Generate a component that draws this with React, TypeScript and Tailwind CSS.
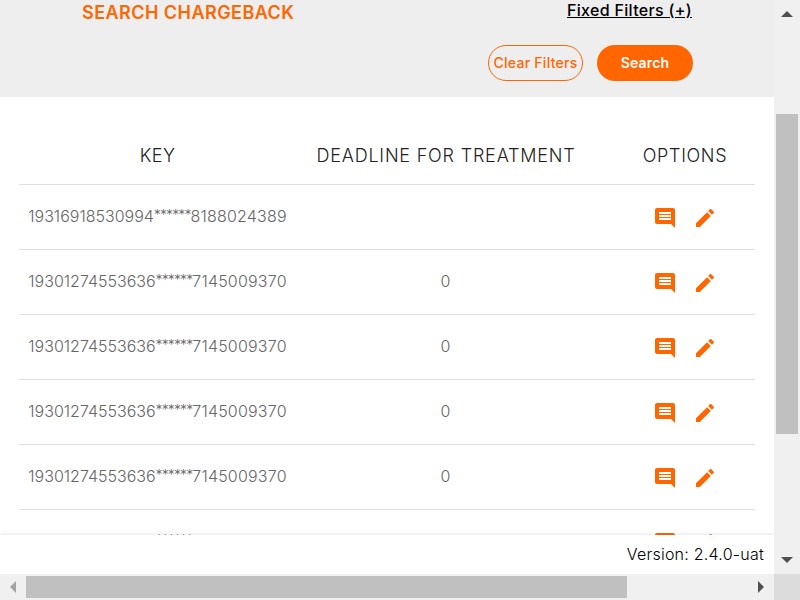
const rows = [
  { key: ["19316918530994", "******", "8188024389"], deadline: "" },
  { key: ["19301274553636", "******", "7145009370"], deadline: "0" },
  { key: ["19301274553636", "******", "7145009370"], deadline: "0" },
  { key: ["19301274553636", "******", "7145009370"], deadline: "0" },
  { key: ["19301274553636", "******", "7145009370"], deadline: "0" },
  { key: ["19301274553636", "******", "7145009370"], deadline: "0" },
];

function CommentIcon() {
  return (
    <svg viewBox="0 0 24 24" className="size-6 fill-[#ff6600]">
      <path d="M21.99 4c0-1.1-.89-2-1.99-2H4c-1.1 0-2 .9-2 2v12c0 1.1.9 2 2 2h14l4 4-.01-18zM18 14H6v-2h12v2zm0-3H6V9h12v2zm0-3H6V6h12v2z" />
    </svg>
  );
}

function EditIcon() {
  return (
    <svg viewBox="0 0 24 24" className="size-6 fill-[#ff6600]">
      <path d="M3 17.25V21h3.75L17.81 9.94l-3.75-3.75L3 17.25zM20.71 7.04c.39-.39.39-1.02 0-1.41l-2.34-2.34c-.39-.39-1.02-.39-1.41 0l-1.83 1.83 3.75 3.75 1.83-1.83z" />
    </svg>
  );
}

function Header() {
  return (
    <header className="h-[97px] shrink-0 bg-[#eeeeee] pl-[82px] pr-[81px]">
      <div className="flex h-[26px] justify-between">
        <h1 className="text-[18px] font-semibold leading-[26px] tracking-[0.45px] text-[#ff6600]">SEARCH CHARGEBACK</h1>
        <a className="mr-px text-[16px] font-medium leading-5 tracking-[0.32px] text-black underline">Fixed Filters (+)</a>
      </div>
      <div className="mt-[19px] flex justify-end gap-[14px]">
        <button className="h-9 w-[95px] whitespace-nowrap rounded-full border border-[#ff6600] pb-0.5 text-center text-[14px] font-medium tracking-[0.27px] text-[#ff6600]">
          Clear Filters
        </button>
        <button className="h-9 w-24 rounded-full bg-[#ff6600] pb-0.5 text-[14px] font-semibold tracking-[0.15px] text-white">Search</button>
      </div>
    </header>
  );
}

function Table() {
  return (
    <main className="h-[438px] overflow-hidden bg-white px-[19px] pt-[30px]">
      <div className="grid h-[58px] grid-cols-[277px_299px_160px] border-b border-[#e0e0e0] text-center text-[18px] font-light leading-[57px] text-[#222222]">
        <div className="tracking-[0.4px]">KEY</div>
        <div className="pl-px tracking-[0.8px]">DEADLINE FOR TREATMENT</div>
        <div className="pl-5 tracking-[0.65px]">OPTIONS</div>
      </div>
      {rows.map((row, i) => (
        <div
          key={i}
          className="grid h-[65px] grid-cols-[277px_299px_160px] border-b border-[#e0e0e0] text-center text-[16px] font-light leading-[62px] text-[#666666]"
        >
          <div className="whitespace-nowrap">
            {row.key[0]}
            <span className="align-[2px] text-[14px] leading-none tracking-[-0.9px]">{row.key[1]}</span>
            <span className="tracking-[0.2px]">{row.key[2]}</span>
          </div>
          <div>{row.deadline}</div>
          <div className="flex items-center justify-center gap-4 pl-5 pt-[2px]">
            <CommentIcon />
            <EditIcon />
          </div>
        </div>
      ))}
    </main>
  );
}

function VerticalScrollbar() {
  return (
    <div className="flex h-[574px] flex-col items-center bg-[#f0f0f0]">
      <svg viewBox="0 0 26 114" className="h-[114px] w-[26px] fill-[#505050]">
        <path d="M7 17L13 11L19 17Z" />
      </svg>
      <div className="h-[320px] w-[22px] bg-[#c0c0c0]" />
      <svg viewBox="0 0 26 140" className="h-[140px] w-[26px] fill-[#505050]">
        <path d="M7 123H19L13 129Z" />
      </svg>
    </div>
  );
}

function HorizontalScrollbar() {
  return (
    <div className="flex h-[26px] items-center bg-[#f0f0f0]">
      <svg viewBox="0 0 26 26" className="size-[26px] fill-[#a3a3a3]">
        <path d="M16 7V19L10 13Z" />
      </svg>
      <div className="h-[22px] w-[601px] bg-[#c0c0c0]" />
      <svg viewBox="0 0 26 26" className="ml-auto size-[26px] fill-[#505050]">
        <path d="M10 7L16 13L10 19Z" />
      </svg>
    </div>
  );
}

export default function App() {
  return (
    <div className="grid h-[600px] w-[800px] grid-cols-[774px_26px] grid-rows-[574px_26px] overflow-hidden bg-white font-['Inter','Liberation_Sans',sans-serif]">
      <div className="flex flex-col overflow-hidden">
        <Header />
        <Table />
        <footer className="relative h-[39px] shrink-0 bg-white pr-[10px] text-right text-[16px] font-light leading-[39px] tracking-[0.24px] text-black shadow-[0_0_4px_rgba(0,0,0,0.15)]">
          Version: 2.4.0-uat
        </footer>
      </div>
      <VerticalScrollbar />
      <HorizontalScrollbar />
      <div className="bg-[#dcdcdc]" />
    </div>
  );
}
